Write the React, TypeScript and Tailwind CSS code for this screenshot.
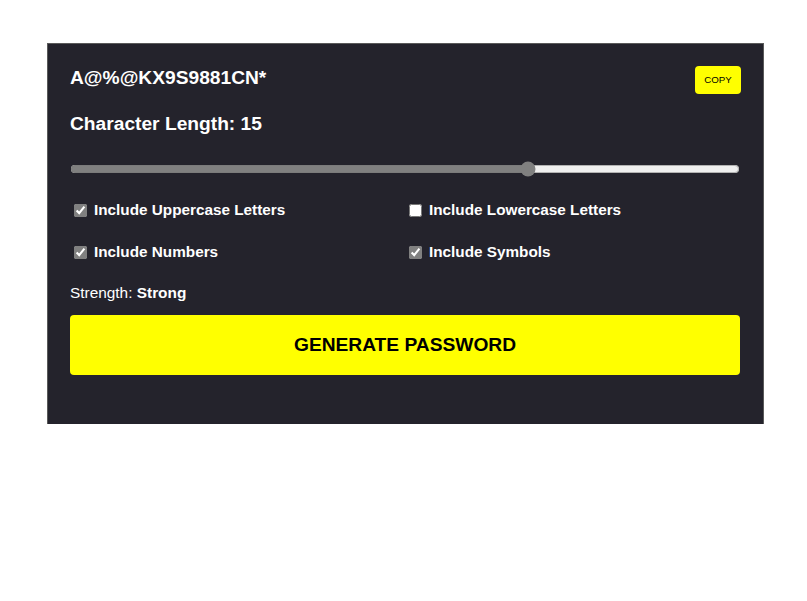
import React, { useState } from "react";

export default function App() {
  const [len, setLen] = useState(15);
  const [opts, setOpts] = useState({ upper: true, lower: false, num: true, sym: true });
  const items: [keyof typeof opts, string][] = [
    ["upper", "Include Uppercase Letters"],
    ["lower", "Include Lowercase Letters"],
    ["num", "Include Numbers"],
    ["sym", "Include Symbols"],
  ];
  return (
    <div className="w-[807px] h-[601px] bg-white" style={{ fontFamily: '"Liberation Sans", Arial, sans-serif' }}>
      <div className="pt-[43px] pl-[47px]">
        <div className="w-[717px] h-[381px] bg-[#24232c] border border-b-0 border-[#5a5a5a] px-[22px] pt-[22px] text-white">
          <div className="flex items-center justify-between h-[28px]">
            <div className="text-[19.2px] font-bold leading-[22px] -mt-[4px]">A@%@KX9S9881CN*</div>
            <button className="w-[46px] h-[28px] bg-[#ffff00] text-black text-[9.7px] rounded-[4px] flex items-center justify-center">COPY</button>
          </div>
          <div className="mt-[19px] text-[19.2px] font-bold leading-[22px]">Character Length: {len}</div>
          <input
            type="range"
            min={4}
            max={20}
            value={len}
            onChange={(e) => setLen(Number(e.target.value))}
            className="block w-[670px] mt-[26px] accent-[#808080]"
          />
          <div className="grid grid-cols-[335px_1fr] mt-[25px] gap-y-[26px]">
            {items.map(([k, label]) => (
              <label key={k} className="flex items-center h-[16px] text-[15.3px] font-bold">
                <input
                  type="checkbox"
                  checked={opts[k]}
                  onChange={() => setOpts({ ...opts, [k]: !opts[k] })}
                  className="ml-[4px] mr-[7px] w-[13px] h-[13px] accent-[#808080]"
                />
                {label}
              </label>
            ))}
          </div>
          <div className="mt-[24px] text-[15.4px] leading-[17px]">
            Strength: <span className="font-bold">Strong</span>
          </div>
          <button className="mt-[14px] w-[670px] h-[60px] bg-[#ffff00] text-black text-[19.2px] font-bold rounded-[4px]">
            GENERATE PASSWORD
          </button>
        </div>
      </div>
    </div>
  );
}
